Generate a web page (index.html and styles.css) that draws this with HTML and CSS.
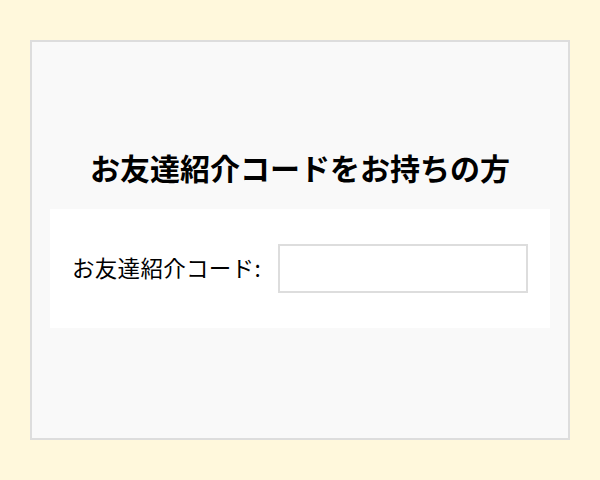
FILE: index.html
```html
<!DOCTYPE html>
<html lang="ja">
<head>
    <meta charset="UTF-8">
    <meta name="viewport" content="width=device-width, initial-scale=1.0">
    <title>お友達紹介コード</title>
    <link rel="stylesheet" href="styles.css">
</head>
<body>
    <div class="container">
        <h2 class="title">お友達紹介コードをお持ちの方</h2>
        <div class="code-box">
            <label class="code-label" for="invite-code">お友達紹介コード:</label>
            <input class="code-input" type="text" id="invite-code">
        </div>
    </div>
</body>
</html>
```

FILE: styles.css
```css
body {
    margin: 0;
    padding: 40px 30px;
    background-color: #fff8dc;
    font-family: 'Noto Sans CJK JP', 'Noto Sans', sans-serif;
    color: #000;
}
.container {
    box-sizing: border-box;
    width: 540px;
    height: 400px;
    border: 2px solid #ddd;
    background-color: #f9f9f9;
    display: flex;
    flex-direction: column;
    justify-content: center;
    align-items: center;
}
.title {
    margin: 0 0 27px;
    font-size: 30px;
    font-weight: bold;
    line-height: 1;
}
.code-box {
    box-sizing: border-box;
    width: 500px;
    height: 119px;
    padding: 0 22px;
    background-color: #fff;
    display: flex;
    align-items: center;
    justify-content: space-between;
}
.code-label {
    font-size: 22.5px;
    letter-spacing: 0.3px;
    margin-top: -3px;
}
.code-input {
    box-sizing: border-box;
    width: 250px;
    height: 49px;
    border: 2px solid #ddd;
    background: #fff;
    outline: none;
}
```
